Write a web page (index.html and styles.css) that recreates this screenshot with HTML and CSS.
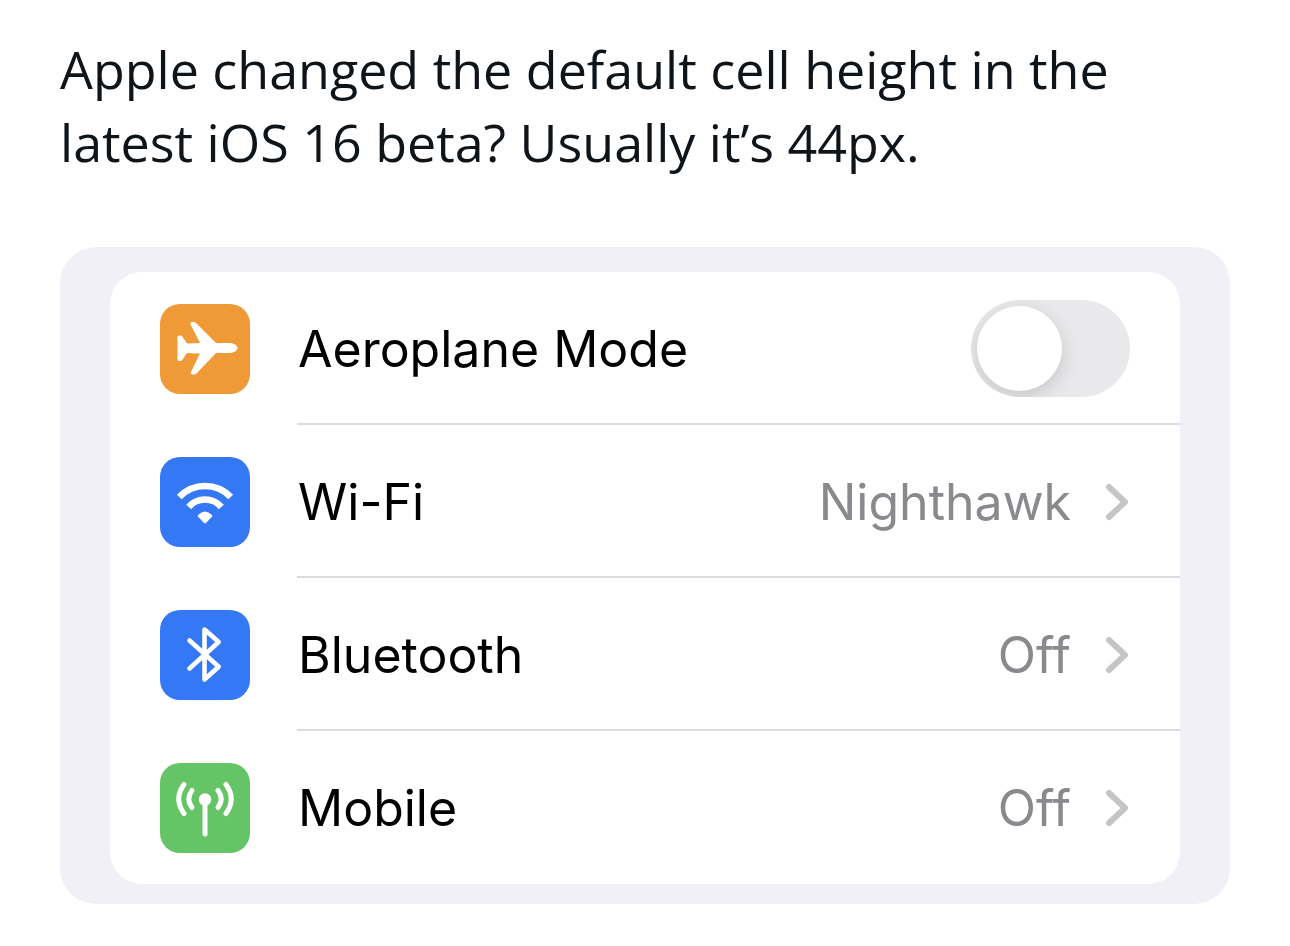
FILE: index.html
```html
<!DOCTYPE html>
<html lang="en">
<head>
    <meta charset="UTF-8">
    <meta name="viewport" content="width=device-width, initial-scale=1.0">
    <title>Default cell height in iOS 16</title>
    <link rel="stylesheet" href="styles.css">
</head>
<body>
    <main class="post">
        <p class="post-text">Apple changed the default cell height in the latest iOS 16 beta? Usually it’s 44px.</p>

        <div class="preview">
            <ul class="settings">
                <li class="row">
                    <svg class="icon icon-orange" viewBox="0 0 90 90" aria-hidden="true">
                        <path fill="#fff" d="M17.500 33q0-1.500 1.500-1.500h1.500q1 0 1.600.8l4.400 6.400q.6.900 1.600.8 6-.5 12-.5L30.500 20.500q-.8-2.500 1.700-2.500h1.300q1.500 0 2.500 1L56 39h13c5 0 8.500 2.500 8.500 5s-3.500 5-8.500 5H56L36.500 69.500q-1 1-2.500 1h-1.300q-2.500 0-1.700-2.500L40 49.500q-6 0-12-.5-1-.1-1.600.8L22.100 56.200q-.6.8-1.600.8H19q-1.500 0-1.500-1.500z"/>
                    </svg>
                    <label class="row-body" for="aeroplane">
                        <span class="name">Aeroplane Mode</span>
                        <input class="switch" type="checkbox" role="switch" id="aeroplane">
                    </label>
                </li>
                <li class="row">
                    <svg class="icon icon-blue" viewBox="0 0 90 90" aria-hidden="true">
                        <g fill="none" stroke="#fff" stroke-width="6.600">
                            <path d="M19.300 40a35.500 35.500 0 0 1 51.400 0"/>
                            <path d="M28.700 50a21.500 21.500 0 0 1 32.600 0"/>
                        </g>
                        <path fill="#fff" d="M38 58q7-7 14 0 .8.900-.1 1.800l-5.700 5.900q-1.200 1.200-2.400 0l-5.700-5.900q-.9-.9-.1-1.800z"/>
                    </svg>
                    <a class="row-body" href="#">
                        <span class="name">Wi-Fi</span>
                        <span class="value">Nighthawk</span>
                        <svg class="chevron" viewBox="0 0 24 38" aria-hidden="true"><path d="M4 4l16 15L4 34"/></svg>
                    </a>
                </li>
                <li class="row">
                    <svg class="icon icon-blue" viewBox="0 0 90 90" aria-hidden="true">
                        <path fill="none" stroke="#fff" stroke-width="4.600" stroke-linecap="round" stroke-linejoin="round" d="M29.500 30.500l29.200 26.200L44.500 69.500v-50L58.700 32 29.500 58.500"/>
                    </svg>
                    <a class="row-body" href="#">
                        <span class="name">Bluetooth</span>
                        <span class="value">Off</span>
                        <svg class="chevron" viewBox="0 0 24 38" aria-hidden="true"><path d="M4 4l16 15L4 34"/></svg>
                    </a>
                </li>
                <li class="row">
                    <svg class="icon icon-green" viewBox="0 0 90 90" aria-hidden="true">
                        <circle cx="45" cy="36.500" r="6.200" fill="#fff"/>
                        <g fill="none" stroke="#fff" stroke-width="5" stroke-linecap="round">
                            <path d="M45 37v34"/>
                            <path d="M32 27.500q-6.500 8.500 0 17M58 27.500q6.500 8.500 0 17"/>
                            <path d="M24 21.500q-10.500 14.500 0 29M66 21.500q10.500 14.500 0 29"/>
                        </g>
                    </svg>
                    <a class="row-body" href="#">
                        <span class="name">Mobile</span>
                        <span class="value">Off</span>
                        <svg class="chevron" viewBox="0 0 24 38" aria-hidden="true"><path d="M4 4l16 15L4 34"/></svg>
                    </a>
                </li>
            </ul>
        </div>
    </main>
</body>
</html>
```
FILE: styles.css
```css
* {
    box-sizing: border-box;
}

body {
    margin: 0;
    background-color: #fff;
    color: #0f1419;
    font-family: Inter, "Liberation Sans", sans-serif;
}

.post {
    padding: 32px 60px 42px;
}

.post-text {
    margin: 0 0 69px;
    font-family: "Open Sans", "Noto Sans", sans-serif;
    font-size: 52px;
    line-height: 73px;
}

/* Grey frame around the settings group */
.preview {
    padding: 25px 50px 20px;
    border-radius: 36px;
    background-color: #f1f0f6;
}

.settings {
    margin: 0;
    padding: 0;
    list-style: none;
    border-radius: 32px;
    background-color: #fff;
}

.row {
    display: flex;
    align-items: center;
    gap: 47px;
    padding-left: 50px;
}

.icon {
    flex: none;
    width: 90px;
    height: 90px;
    border-radius: 20px;
}

.icon-orange {
    background-color: #f09a37;
}

.icon-blue {
    background-color: #3478f6;
}

.icon-green {
    background-color: #65c466;
}

/* The divider starts at the label, not under the icon */
.row-body {
    flex: 1;
    display: flex;
    align-items: center;
    height: 153px;
    padding-right: 50px;
    border-top: 2px solid transparent;
    border-bottom: 2px solid #dcdcde;
    color: #000;
    font-size: 50px;
    text-decoration: none;
}

.row:last-child .row-body {
    border-bottom-color: transparent;
}

.name {
    flex: 1;
    padding-left: 1px;
}

.value {
    margin-right: 34px;
    color: #8a8a8e;
}

.chevron {
    width: 24px;
    height: 38px;
    margin-right: 1px;
    fill: none;
    stroke: #c5c5c7;
    stroke-width: 6;
    stroke-linecap: round;
    stroke-linejoin: round;
}

.switch {
    appearance: none;
    width: 159px;
    height: 97px;
    margin: 0;
    padding: 6px;
    border-radius: 49px;
    background-color: #e9e9eb;
    overflow: hidden;
    cursor: pointer;
}

.switch::before {
    content: "";
    display: block;
    width: 85px;
    height: 85px;
    border-radius: 50%;
    background-color: #fff;
    box-shadow: 0 6px 20px rgba(0, 0, 0, 0.15);
}

.switch:checked {
    background-color: #65c466;
}

.switch:checked::before {
    margin-left: auto;
}
```
